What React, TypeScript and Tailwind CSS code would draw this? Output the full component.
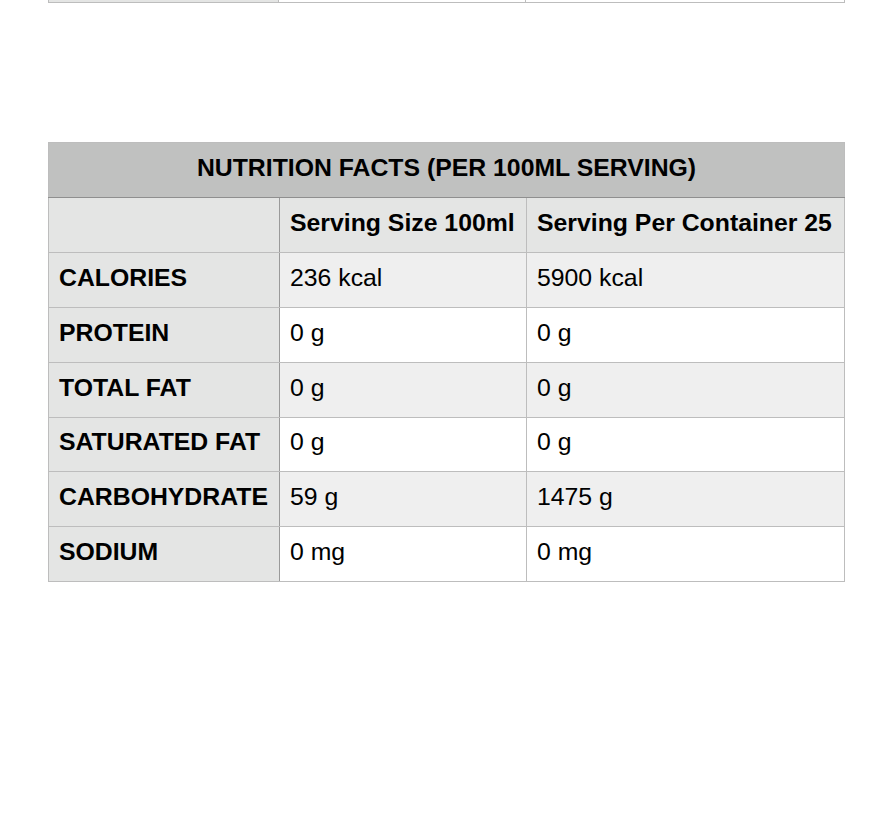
const rows = [
  { label: 'CALORIES', a: '236 kcal', b: '5900 kcal' },
  { label: 'PROTEIN', a: '0 g', b: '0 g' },
  { label: 'TOTAL FAT', a: '0 g', b: '0 g' },
  { label: 'SATURATED FAT', a: '0 g', b: '0 g' },
  { label: 'CARBOHYDRATE', a: '59 g', b: '1475 g' },
  { label: 'SODIUM', a: '0 mg', b: '0 mg' },
];

export default function App() {
  return (
    <div className="min-h-[826px] bg-white px-[48px] text-black" style={{ fontFamily: '"Liberation Sans", Arial, sans-serif' }}>
      {/* tail of the previous table */}
      <div className="flex h-[3px] w-[797px] border-x border-b border-[#bdbdbd]">
        <div className="w-[230px] border-r border-[#bdbdbd] bg-[#e4e5e4]" />
        <div className="w-[247px] border-r border-[#bdbdbd]" />
        <div className="flex-1" />
      </div>

      <table className="mt-[139px] w-[797px] table-fixed border-collapse whitespace-nowrap text-[24.8px] leading-none">
        <colgroup>
          <col className="w-[231px]" />
          <col className="w-[247px]" />
          <col />
        </colgroup>
        <thead>
          <tr className="h-[55px] bg-[#c0c1c0]">
            <th colSpan={3} className="border border-[#bdbdbd] border-b-[#8f8f8f] pb-[4px] text-center font-bold">
              NUTRITION FACTS (PER 100ML SERVING)
            </th>
          </tr>
        </thead>
        <tbody>
          <tr className="h-[55px] bg-[#e4e5e4]">
            <td className="border border-[#bdbdbd] border-r-[#9a9a9a]" />
            <td className="border border-[#bdbdbd] pb-[4px] pl-[10px] font-bold">Serving Size 100ml</td>
            <td className="border border-[#bdbdbd] pb-[4px] pl-[10px] font-bold">Serving Per Container 25</td>
          </tr>
          {rows.map((r, i) => (
            <tr key={r.label} className={`${i === 3 ? 'h-[54px]' : 'h-[55px]'} ${i % 2 === 0 ? 'bg-[#efefef]' : 'bg-white'}`}>
              <td className="border border-[#bdbdbd] border-r-[#9a9a9a] bg-[#e4e5e4] pb-[4px] pl-[10px] font-bold">{r.label}</td>
              <td className="border border-[#bdbdbd] pb-[4px] pl-[10px]">{r.a}</td>
              <td className="border border-[#bdbdbd] pb-[4px] pl-[10px]">{r.b}</td>
            </tr>
          ))}
        </tbody>
      </table>
    </div>
  );
}
